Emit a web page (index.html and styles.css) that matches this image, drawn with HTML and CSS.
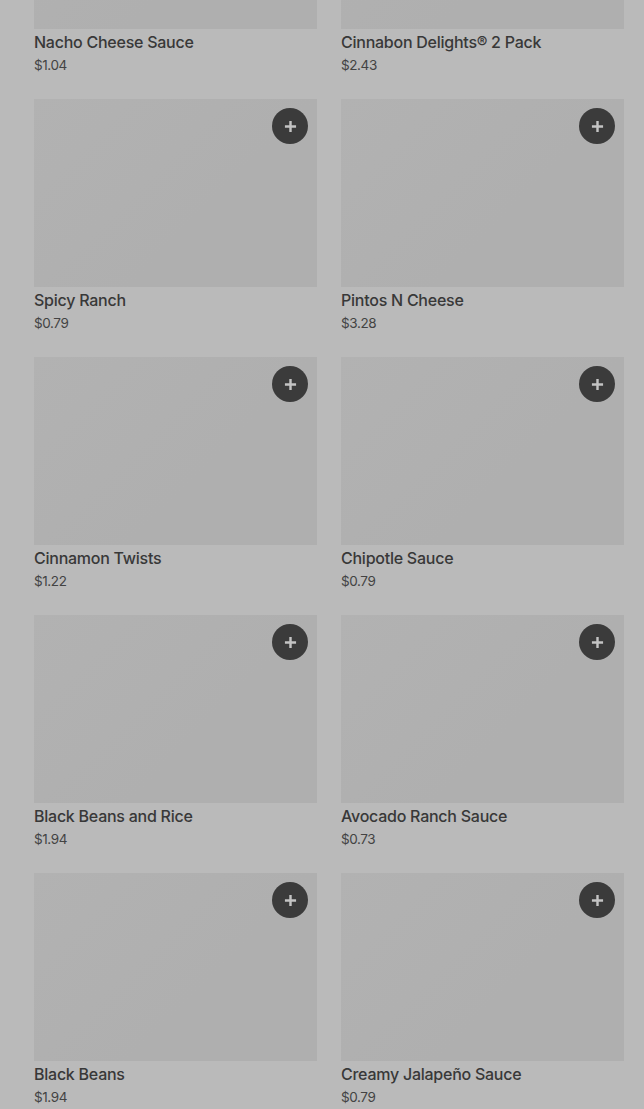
FILE: index.html
```html
<!DOCTYPE html>
<html lang="en">
<head>
    <meta charset="UTF-8">
    <meta name="viewport" content="width=device-width, initial-scale=1.0">
    <title>Menu</title>
    <link rel="stylesheet" href="styles.css">
</head>
<body>
    <main class="menu">
        <section class="item-grid">
            <div class="item">
                <div class="photo"><button class="add"><svg viewBox="0 0 14 14"><path d="M7 1v12M1 7h12"/></svg></button></div>
                <div class="info"><h3>Nacho Cheese Sauce</h3><p>$1.04</p></div>
            </div>
            <div class="item">
                <div class="photo"><button class="add"><svg viewBox="0 0 14 14"><path d="M7 1v12M1 7h12"/></svg></button></div>
                <div class="info"><h3>Cinnabon Delights® 2 Pack</h3><p>$2.43</p></div>
            </div>
            <div class="item">
                <div class="photo"><button class="add"><svg viewBox="0 0 14 14"><path d="M7 1v12M1 7h12"/></svg></button></div>
                <div class="info"><h3>Spicy Ranch</h3><p>$0.79</p></div>
            </div>
            <div class="item">
                <div class="photo"><button class="add"><svg viewBox="0 0 14 14"><path d="M7 1v12M1 7h12"/></svg></button></div>
                <div class="info"><h3>Pintos N Cheese</h3><p>$3.28</p></div>
            </div>
            <div class="item">
                <div class="photo"><button class="add"><svg viewBox="0 0 14 14"><path d="M7 1v12M1 7h12"/></svg></button></div>
                <div class="info"><h3>Cinnamon Twists</h3><p>$1.22</p></div>
            </div>
            <div class="item">
                <div class="photo"><button class="add"><svg viewBox="0 0 14 14"><path d="M7 1v12M1 7h12"/></svg></button></div>
                <div class="info"><h3>Chipotle Sauce</h3><p>$0.79</p></div>
            </div>
            <div class="item">
                <div class="photo"><button class="add"><svg viewBox="0 0 14 14"><path d="M7 1v12M1 7h12"/></svg></button></div>
                <div class="info"><h3>Black Beans and Rice</h3><p>$1.94</p></div>
            </div>
            <div class="item">
                <div class="photo"><button class="add"><svg viewBox="0 0 14 14"><path d="M7 1v12M1 7h12"/></svg></button></div>
                <div class="info"><h3>Avocado Ranch Sauce</h3><p>$0.73</p></div>
            </div>
            <div class="item">
                <div class="photo"><button class="add"><svg viewBox="0 0 14 14"><path d="M7 1v12M1 7h12"/></svg></button></div>
                <div class="info"><h3>Black Beans</h3><p>$1.94</p></div>
            </div>
            <div class="item">
                <div class="photo"><button class="add"><svg viewBox="0 0 14 14"><path d="M7 1v12M1 7h12"/></svg></button></div>
                <div class="info"><h3>Creamy Jalapeño Sauce</h3><p>$0.79</p></div>
            </div>
        </section>
    </main>
</body>
</html>
```

FILE: styles.css
```css
:root{
    --backdrop:#bababa;
    --photo:#afafaf;
    --ink:#383838;
    --ink-soft:#434343;
    --button:#3b3b3b;
    --plus:#c4c4c4;
}

*{
    box-sizing: border-box;
    margin: 0;
    padding: 0;
}

body{
    background: var(--backdrop);
    font-family: Inter, "Noto Sans", Roboto, sans-serif;
    color: var(--ink);
    overflow: hidden;
    height: 1109px;
}

.menu{
    padding: 0 20px 0 34px;
}

.item-grid{
    display: grid;
    grid-template-columns: 283px 283px;
    column-gap: 24px;
    row-gap: 24px;
    /* page is scrolled: first row is cut at the top */
    margin-top: -159px;
}

.photo{
    position: relative;
    height: 188px;
    background: linear-gradient(135deg, #b2b2b2, var(--photo) 60%);
}

.add{
    position: absolute;
    top: 9px;
    right: 9px;
    width: 36px;
    height: 36px;
    border: none;
    border-radius: 50%;
    background: var(--button);
    display: flex;
    align-items: center;
    justify-content: center;
    cursor: pointer;
}
.add svg{
    width: 13px;
    height: 13px;
    stroke: var(--plus);
    stroke-width: 2.6;
    fill: none;
}

.info{
    padding-top: 3px;
}
.info h3{
    font-size: 16px;
    font-weight: 500;
    line-height: 20px;
    letter-spacing: -0.25px;
    color: var(--ink);
}
.info p{
    margin-top: 3px;
    font-size: 13.5px;
    line-height: 20px;
    color: var(--ink-soft);
    letter-spacing: -0.4px;
}
```
